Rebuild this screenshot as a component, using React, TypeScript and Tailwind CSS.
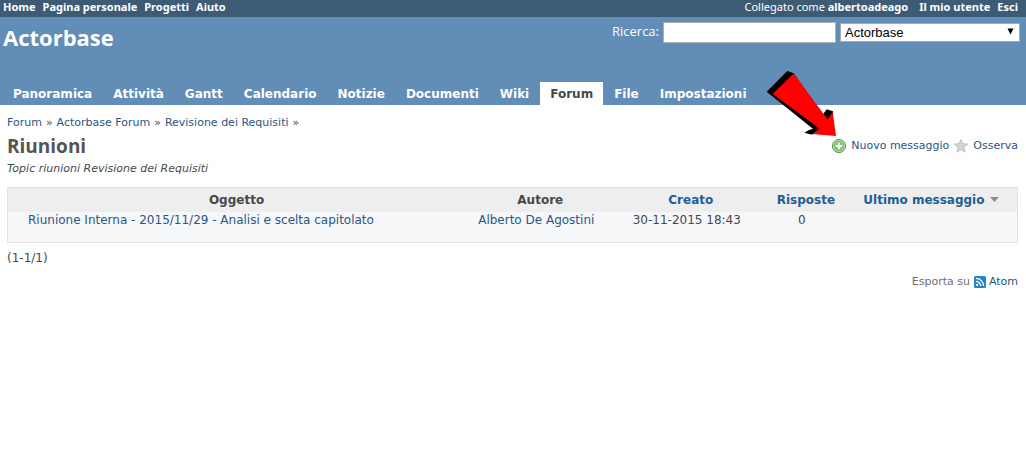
import type { ReactNode } from "react";

const tabs = ["Panoramica", "Attività", "Gantt", "Calendario", "Notizie", "Documenti", "Wiki", "Forum", "File", "Impostazioni"];

function Link({ children, className = "" }: { children: ReactNode; className?: string }) {
  return (
    <a href="#" className={`hover:underline ${className}`}>
      {children}
    </a>
  );
}

function AddIcon() {
  return (
    <svg width="16" height="16" viewBox="0 0 16 16" aria-hidden="true">
      <circle cx="8" cy="8" r="6.6" fill="#b9dcab" stroke="#5a9c50" strokeWidth="1" />
      <circle cx="8" cy="8" r="5.3" fill="#86c56f" />
      <path d="M6.6 4.3h2.8v2.3h2.3v2.8H9.4v2.3H6.6V9.400H4.300V6.600h2.300z" fill="#fff" stroke="#5fa74e" strokeWidth="0.5" />
    </svg>
  );
}

function StarIcon() {
  return (
    <svg width="16" height="16" viewBox="0 0 16 16" aria-hidden="true">
      <path d="M8 1.2l1.9 4.4 4.9.5-3.7 3.2 1.1 4.9L8 11.7l-4.2 2.5 1.1-4.9L1.2 6.1l4.900-.5z" fill="#d2d2d2" stroke="#bdbdbd" strokeWidth="0.8" />
    </svg>
  );
}

function FeedIcon() {
  return (
    <svg width="12" height="12" viewBox="0 0 12 12" aria-hidden="true">
      <rect width="12" height="12" rx="1.5" fill="#2585cc" />
      <circle cx="3.1" cy="8.9" r="1.1" fill="#fff" />
      <path d="M2 5.3a4.7 4.7 0 0 1 4.7 4.7M2 2.4A7.6 7.6 0 0 1 9.6 10" fill="none" stroke="#fff" strokeWidth="1.3" />
    </svg>
  );
}

function Arrow() {
  return (
    <svg className="pointer-events-none absolute right-full bottom-full -mr-[5px] -mb-[5px]" width="70" height="66" viewBox="0 0 70 66" aria-hidden="true">
      <path d="M0.7 21.7L21.3 1l6.4 2.2 29 41.5 4-5.4 6.3 2-3.4 20.7-18.6 2.5-6.7-1.8 4.3-2.5 4.3-1.4z" fill="#000" />
      <path d="M27.6 3.4L61.7 49.500 66.700 42 70 66 46.700 64 53 58.300 6.700 24z" fill="#f00" />
    </svg>
  );
}

export default function App() {
  return (
    <div className="bg-white font-['DejaVu_Sans',sans-serif] text-[11px] leading-4 text-[#484848]">
      <div className="flex h-[17px] items-start justify-between bg-[#3e5b76] pr-2 pl-[3px] font-['Noto_Sans',sans-serif] text-[11px] leading-[14px] text-white">
        <nav className="flex gap-[7px] font-bold">
          {["Home", "Pagina personale", "Progetti", "Aiuto"].map((item) => (
            <Link key={item}>{item}</Link>
          ))}
        </nav>
        <div className="flex gap-[7px]">
          <span className="pr-1">
            Collegato come <Link className="font-bold">albertoadeago</Link>
          </span>
          <Link className="font-bold">Il mio utente</Link>
          <Link className="font-bold">Esci</Link>
        </div>
      </div>

      <header className="bg-[#628db6] text-white">
        <div className="flex h-[65px] items-start justify-between pr-[6px] pl-[3px]">
          <h1 className="pt-1 font-['Open_Sans',sans-serif] text-[22px] leading-8 font-bold">Actorbase</h1>
          <form className="flex items-start gap-1 pt-[5px]">
            <label htmlFor="search" className="font-['Open_Sans',sans-serif] text-[13px] leading-[18px]">Ricerca:</label>
            <input id="search" type="text" className="h-[21px] w-[173px] border border-[#b0b0b0] bg-white px-1 text-black" />
            <span className="relative flex pt-px">
              <select aria-label="Progetto" defaultValue="Actorbase" className="h-[19px] w-[180px] appearance-none border border-[#a9a9a9] bg-white px-1 font-['Liberation_Sans',sans-serif] text-[13px] leading-4 text-black">
                <option>Actorbase</option>
              </select>
              <svg className="pointer-events-none absolute top-1.5 right-1.5" width="7" height="7" viewBox="0 0 7 7" aria-hidden="true">
                <path d="M0.500 0.500h6L3.500 6.500z" fill="#000" />
              </svg>
            </span>
          </form>
        </div>
        <nav className="flex gap-px pl-[3px] font-bold">
          {tabs.map((tab) => (
            <a
              key={tab}
              href="#"
              aria-current={tab === "Forum" ? "page" : undefined}
              className={`h-[23px] px-[10px] text-[12px] leading-6 ${tab === "Forum" ? "bg-white text-[#484848]" : ""}`}
            >
              {tab}
            </a>
          ))}
        </nav>
      </header>

      <main className="pt-[10px] pr-2 pl-[7px]">
        <p className="flex gap-1">
          <Link className="text-[#2a5685]">Forum</Link> »
          <Link className="text-[#2a5685]">Actorbase Forum</Link> »
          <Link className="text-[#2a5685]">Revisione dei Requisiti</Link> »
        </p>
        <div className="flex items-start justify-between">
          <h2 className="pt-px font-['Open_Sans',sans-serif] text-[19px] leading-7 font-bold text-[#555]">Riunioni</h2>
          <div className="relative flex items-center gap-1 pt-[7px] text-[#2a5685]">
            <Arrow />
            <a href="#" className="flex items-center gap-1"><AddIcon />Nuovo messaggio</a>
            <a href="#" className="flex items-center gap-1"><StarIcon />Osserva</a>
          </div>
        </div>
        <p className="pt-px italic">Topic riunioni Revisione dei Requisiti</p>

        <table className="mt-[10px] w-full table-fixed border-collapse border border-[#e2e2e2] text-center text-[12px]">
          <colgroup>
            <col className="w-[45.3%]" />
            <col className="w-[14.9%]" />
            <col className="w-[14.9%]" />
            <col className="w-[7.9%]" />
            <col className="w-[17%]" />
          </colgroup>
          <thead>
            <tr className="h-6 bg-[#eee]">
              <th>Oggetto</th>
              <th>Autore</th>
              <th className="text-[#1d5f96]"><Link>Creato</Link></th>
              <th className="text-[#1d5f96]"><Link>Risposte</Link></th>
              <th className="text-[#1d5f96]">
                <a href="#" className="flex items-center justify-center gap-1.5">
                  Ultimo messaggio
                  <svg width="9" height="5" viewBox="0 0 9 5" aria-hidden="true"><path d="M0 0h9L4.500 5z" fill="#8b8b8b" /></svg>
                </a>
              </th>
            </tr>
          </thead>
          <tbody>
            <tr className="h-[31px] bg-[#f6f7f9] align-top">
              <td className="pl-5 text-left"><Link className="text-[#2a5685]">Riunione Interna - 2015/11/29 - Analisi e scelta capitolato</Link></td>
              <td className="pr-2"><Link className="text-[#2a5685]">Alberto De Agostini</Link></td>
              <td className="pr-2">30-11-2015 18:43</td>
              <td className="pr-2">0</td>
              <td />
            </tr>
          </tbody>
        </table>

        <p className="pt-[7px] text-[12px]">(1-1/1)</p>
        <p className="flex items-center justify-end gap-1 pt-2 text-[#707070]">
          Esporta su
          <a href="#" className="flex items-center gap-[3px] text-[#2a5685]"><FeedIcon />Atom</a>
        </p>
      </main>
    </div>
  );
}
